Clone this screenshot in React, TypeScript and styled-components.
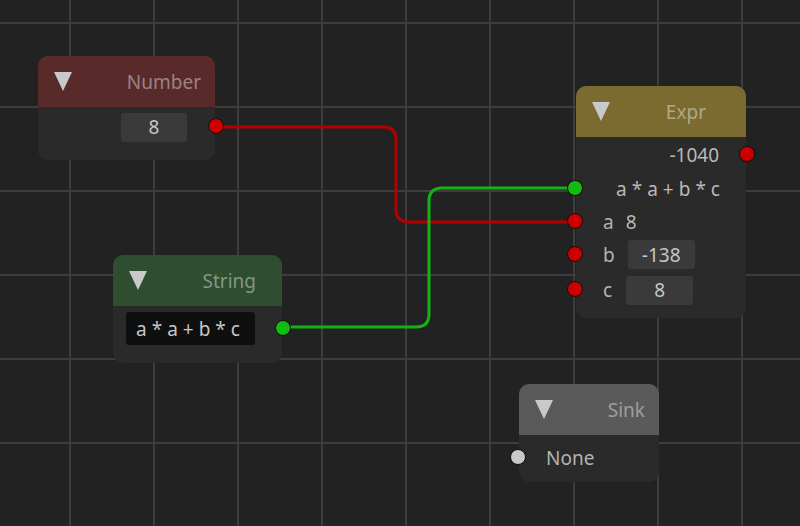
import React from "react";
import styled, { createGlobalStyle } from "styled-components";

const GlobalStyle = createGlobalStyle`
  html, body {
    margin: 0;
    padding: 0;
    background: #222222;
  }
  body {
    font-family: "Noto Sans", "DejaVu Sans", sans-serif;
  }
`;

const Canvas = styled.div`
  position: relative;
  width: 800px;
  height: 526px;
  overflow: hidden;
  background-color: #222222;
  background-image:
    linear-gradient(to right, #3d3d3d 0, #3d3d3d 2px, transparent 2px),
    linear-gradient(to bottom, #3d3d3d 0, #3d3d3d 2px, transparent 2px);
  background-size: 84px 84px;
  background-position: 69px 22px;
`;

const Wires = styled.svg`
  position: absolute;
  left: 0;
  top: 0;
  width: 800px;
  height: 526px;
  pointer-events: none;
  z-index: 0;
`;

const NodeBox = styled.div<{ $x: number; $y: number; $w: number }>`
  position: absolute;
  left: ${(p) => p.$x}px;
  top: ${(p) => p.$y}px;
  width: ${(p) => p.$w}px;
  background: #2a2a2a;
  border-radius: 10px;
  z-index: 1;
  display: flex;
  flex-direction: column;
`;

const Header = styled.div<{ $color: string }>`
  height: 51px;
  background: ${(p) => p.$color};
  border-radius: 10px 10px 0 0;
  display: flex;
  align-items: center;
  justify-content: space-between;
  padding: 0 14px 0 16px;
  box-sizing: border-box;
`;

const Title = styled.span`
  color: rgba(255, 255, 255, 0.42);
  font-size: 19px;
`;

const Body = styled.div<{ $pad?: string }>`
  display: flex;
  flex-direction: column;
  padding: ${(p) => p.$pad || "6px 0 12px"};
`;

const Row = styled.div<{ $h?: number; $justify?: string }>`
  position: relative;
  height: ${(p) => p.$h || 34}px;
  display: flex;
  align-items: center;
  justify-content: ${(p) => p.$justify || "flex-start"};
  padding: 0 27px 0 27px;
  gap: 12px;
  color: #b9b9b9;
  font-size: 19px;
`;

const Label = styled.span`
  color: #b3b3b3;
`;

const Field = styled.div<{ $w: number; $dark?: boolean }>`
  width: ${(p) => p.$w}px;
  height: 29px;
  border-radius: 3px;
  background: ${(p) => (p.$dark ? "#0f0f0f" : "#3a3a3a")};
  color: #c6c6c6;
  font-size: 19px;
  display: flex;
  align-items: center;
  justify-content: center;
`;

const Expr = styled.span`
  letter-spacing: 5px;
`;

const Port = styled.span<{ $side: "left" | "right"; $color: string }>`
  position: absolute;
  ${(p) => p.$side}: -9px;
  top: 50%;
  width: 14px;
  height: 14px;
  margin-top: -9px;
  border-radius: 50%;
  background: ${(p) => p.$color};
  border: 1.5px solid #1a0a0a;
`;

const Collapse = () => (
  <svg width="18" height="19" viewBox="0 0 18 19">
    <polygon points="0,0 18,0 9,19" fill="#c9c9c9" />
  </svg>
);

const RED = "#cc0000";
const GREEN = "#11bb11";

export default function App() {
  return (
    <>
      <GlobalStyle />
      <Canvas>
        <Wires viewBox="0 0 800 526">
          <path
            d="M215 127 H383 Q396 127 396 140 V209 Q396 222 409 222 H576"
            fill="none"
            stroke="#b30000"
            strokeWidth="3"
          />
          <path
            d="M282 327 H416 Q429 327 429 314 V201 Q429 188 442 188 H576"
            fill="none"
            stroke="#12b312"
            strokeWidth="3"
          />
        </Wires>

        <NodeBox $x={38} $y={56} $w={177}>
          <Header $color="#592a2a">
            <Collapse />
            <Title>Number</Title>
          </Header>
          <Body $pad="6px 0 19px">
            <Row $h={28} $justify="flex-end" style={{ paddingRight: 28 }}>
              <Field $w={66}>8</Field>
              <Port $side="right" $color={RED} />
            </Row>
          </Body>
        </NodeBox>

        <NodeBox $x={576} $y={86} $w={170}>
          <Header $color="#7b6b30">
            <Collapse />
            <Title style={{ marginRight: 26 }}>Expr</Title>
          </Header>
          <Body $pad="1px 0 8px">
            <Row $justify="flex-end">
              <span>-1040</span>
              <Port $side="right" $color={RED} />
            </Row>
            <Row $h={33} $justify="flex-end" style={{ paddingRight: 21 }}>
              <Expr>a*a+b*c</Expr>
              <Port $side="left" $color={GREEN} />
            </Row>
            <Row>
              <Label>a</Label>
              <span>8</span>
              <Port $side="left" $color={RED} />
            </Row>
            <Row $h={31} style={{ gap: 13 }}>
              <Label>b</Label>
              <Field $w={67}>-138</Field>
              <Port $side="left" $color={RED} />
            </Row>
            <Row $h={40} style={{ gap: 14 }}>
              <Label>c</Label>
              <Field $w={67}>8</Field>
              <Port $side="left" $color={RED} />
            </Row>
          </Body>
        </NodeBox>

        <NodeBox $x={113} $y={255} $w={169}>
          <Header $color="#2f4d2f">
            <Collapse />
            <Title style={{ marginRight: 12 }}>String</Title>
          </Header>
          <Body $pad="6px 0 18px">
            <Row $h={33} style={{ paddingLeft: 13 }}>
              <Field $w={129} $dark style={{ height: 33 }}>
                <Expr>a*a+b*c</Expr>
              </Field>
              <Port $side="right" $color={GREEN} />
            </Row>
          </Body>
        </NodeBox>

        <NodeBox $x={519} $y={384} $w={140}>
          <Header $color="#5a5a5a">
            <Collapse />
            <Title>Sink</Title>
          </Header>
          <Body $pad="6px 0 7px">
            <Row style={{ paddingLeft: 27 }}>
              <Label>None</Label>
              <Port $side="left" $color="#c8c8c8" />
            </Row>
          </Body>
        </NodeBox>
      </Canvas>
    </>
  );
}
